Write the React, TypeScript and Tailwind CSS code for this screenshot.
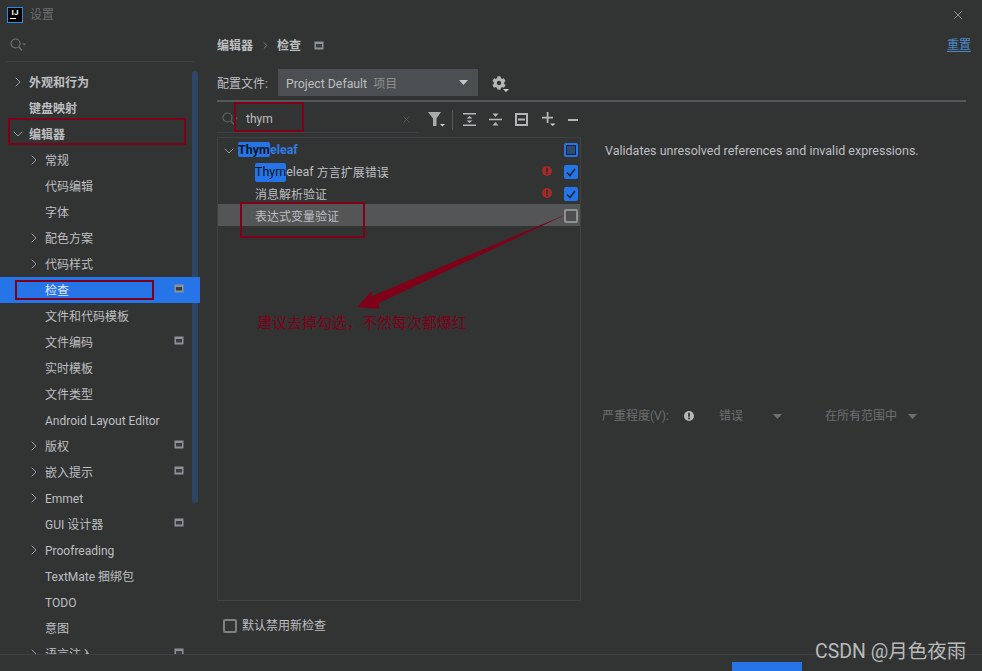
import React from 'react';
import { ChevronRight, ChevronDown, X } from 'lucide-react';
import { FaCog } from 'react-icons/fa';

interface NavItem {
  label: string;
  level: 0 | 1;
  arrow?: 'right' | 'down';
  badge?: boolean;
  active?: boolean;
}

const navItems: NavItem[] = [
  { label: '外观和行为', level: 0, arrow: 'right' },
  { label: '键盘映射', level: 0 },
  { label: '编辑器', level: 0, arrow: 'down' },
  { label: '常规', level: 1, arrow: 'right' },
  { label: '代码编辑', level: 1 },
  { label: '字体', level: 1 },
  { label: '配色方案', level: 1, arrow: 'right' },
  { label: '代码样式', level: 1, arrow: 'right' },
  { label: '检查', level: 1, badge: true, active: true },
  { label: '文件和代码模板', level: 1 },
  { label: '文件编码', level: 1, badge: true },
  { label: '实时模板', level: 1 },
  { label: '文件类型', level: 1 },
  { label: 'Android Layout Editor', level: 1 },
  { label: '版权', level: 1, arrow: 'right', badge: true },
  { label: '嵌入提示', level: 1, arrow: 'right', badge: true },
  { label: 'Emmet', level: 1, arrow: 'right' },
  { label: 'GUI 设计器', level: 1, badge: true },
  { label: 'Proofreading', level: 1, arrow: 'right' },
  { label: 'TextMate 捆绑包', level: 1 },
  { label: 'TODO', level: 1 },
  { label: '意图', level: 1 },
  { label: '语言注入', level: 1, arrow: 'right', badge: true },
];

const ProjectBadge = () => (
  <svg width="10" height="9" viewBox="0 0 10 9" className="shrink-0">
    <rect x="0.5" y="0.5" width="9" height="8" fill="#8b9298" />
    <rect x="2" y="3" width="6" height="3.5" fill="#3a3d3f" />
  </svg>
);

const SearchIcon = ({ color }: { color: string }) => (
  <svg width="16" height="14" viewBox="0 0 16 14" fill="none" className="shrink-0">
    <circle cx="5.5" cy="5.5" r="4.5" stroke={color} strokeWidth="1.2" />
    <path d="M9 9l3 3.5" stroke={color} strokeWidth="1.3" />
    <path d="M12.5 5.5h3.5l-1.75 2z" fill={color} />
  </svg>
);

const ErrorDot = ({ color, mark }: { color: string; mark: string }) => (
  <svg width="10" height="10" viewBox="0 0 10 10" className="shrink-0">
    <circle cx="5" cy="5" r="5" fill={color} />
    <rect x="4.1" y="1.8" width="1.8" height="4" fill={mark} />
    <rect x="4.1" y="6.6" width="1.8" height="1.7" fill={mark} />
  </svg>
);

const CheckBox = ({ state }: { state: 'on' | 'mixed' | 'off' }) => {
  if (state === 'on') {
    return (
      <div className="w-[14px] h-[14px] rounded-[2px] bg-[#2675e8] flex items-center justify-center">
        <svg width="10" height="9" viewBox="0 0 10 9" fill="none">
          <path d="M1 4.5l3 3 5-6.5" stroke="#16243a" strokeWidth="1.5" />
        </svg>
      </div>
    );
  }
  if (state === 'mixed') {
    return (
      <div className="w-[14px] h-[14px] rounded-[2px] bg-[#2675e8] flex items-center justify-center">
        <div className="w-[10px] h-[10px] bg-[#2c4a72] border border-[#16243a]" />
      </div>
    );
  }
  return <div className="w-[14px] h-[14px] rounded-[2px] border-2 border-[#8f9192] bg-[#4c4e50]" />;
};

const DropArrow = ({ color = '#6e6e6e' }: { color?: string }) => (
  <svg width="9" height="5" viewBox="0 0 9 5" className="shrink-0">
    <path d="M0 0h9L4.5 5z" fill={color} />
  </svg>
);

const Toolbar = () => (
  <div className="flex items-center h-[27px] ml-[9px]">
    <svg width="18" height="17" viewBox="0 0 18 17">
      <path d="M0 1h13L8.5 7.5V15H5V7.5z" fill="#a9abac" />
      <path d="M12 13h5l-2.5 2.5z" fill="#d0d0d0" />
    </svg>
    <div className="w-px h-[20px] bg-[#55585a] ml-[6px] mr-[10px]" />
    <svg width="13" height="13" viewBox="0 0 13 13" className="mr-[13px]">
      <path d="M0 0h13v1.6H0zM0 11.4h13V13H0zM3.5 5.6L6.5 3l3 2.6zM3.5 7.4h6l-3 2.6z" fill="#b4b6b7" />
    </svg>
    <svg width="13" height="13" viewBox="0 0 13 13" className="mr-[13px]">
      <path d="M0 5.7h13v1.6H0zM3.5 0.5h6l-3 3.6zM3.5 12.5l3-3.6 3 3.6z" fill="#b4b6b7" />
    </svg>
    <svg width="13" height="13" viewBox="0 0 13 13" fill="none" className="mr-[14px]">
      <rect x="1" y="1" width="11" height="11" stroke="#b4b6b7" strokeWidth="2" />
      <path d="M3 6.5h7" stroke="#b4b6b7" strokeWidth="2" />
    </svg>
    <svg width="16" height="15" viewBox="0 0 16 15" className="mr-[10px]">
      <path d="M4.7 0h1.8v4.7H11v1.8H6.5V11H4.7V6.5H0V4.7h4.7z" fill="#b4b6b7" />
      <path d="M8 11.5h5.5L10.75 14z" fill="#d0d0d0" />
    </svg>
    <div className="w-[10px] h-[2px] bg-[#b4b6b7]" />
  </div>
);

const Sidebar = () => (
  <div className="w-[200px] shrink-0 flex flex-col relative overflow-hidden">
    <div className="h-[33px] shrink-0 mx-[6px] border-b border-[#3f4244] flex items-center pl-[4px]">
      <SearchIcon color="#6f7172" />
    </div>
    <div className="absolute left-[192px] top-[42px] w-[6px] h-[432px] rounded-[3px] bg-[#2f4565]" />
    <div className="pt-[7px]">
      {navItems.map((item) => (
        <div
          key={item.label}
          className={
            'relative h-[26px] flex items-center text-[12px] ' +
            (item.active ? 'bg-[#2675e8] text-[#e4e9ef]' : 'text-[#bdbfc0]')
          }
        >
          <div className={item.level === 0 ? 'w-[29px] pl-[10px]' : 'w-[45px] pl-[26px]'}>
            {item.arrow === 'right' && <ChevronRight size={16} strokeWidth={1.5} className="text-[#9a9c9d]" />}
            {item.arrow === 'down' && <ChevronDown size={16} strokeWidth={1.5} className="text-[#9a9c9d]" />}
          </div>
          <span className={'flex-1 pt-[2px] ' + (item.level === 0 ? 'font-bold' : '')}>{item.label}</span>
          {item.badge && (
            <div className="mr-[16px] -mt-[3px]">
              <ProjectBadge />
            </div>
          )}
        </div>
      ))}
    </div>
  </div>
);

const TreeRow = ({
  indent,
  selected,
  error,
  box,
  children,
}: {
  indent: number;
  selected?: boolean;
  error?: boolean;
  box: 'on' | 'mixed' | 'off';
  children: React.ReactNode;
}) => (
  <div className={'h-[22px] flex items-center pr-[2px] ' + (selected ? 'bg-[#535557]' : '')} style={{ paddingLeft: indent }}>
    <div className="flex-1 flex items-center whitespace-nowrap pt-[3px]">{children}</div>
    {error && (
      <div className="mr-[12px]">
        <ErrorDot color="#a32a26" mark="#2f3131" />
      </div>
    )}
    <div className="pt-[2px]">
      <CheckBox state={box} />
    </div>
  </div>
);

const Hit = ({ children }: { children: React.ReactNode }) => (
  <span className="bg-[#2675e8] text-[#0c1522] rounded-[2px] text-[12.5px]">{children}</span>
);

const Inspections = () => (
  <div className="flex-1 flex flex-col pl-[17px] pr-[16px] min-w-0">
    <div className="h-[32px] shrink-0 flex items-center text-[12px] text-[#bdbfc0] font-bold">
      <span className="pt-[2px]">编辑器</span>
      <ChevronRight size={11} strokeWidth={1.5} className="ml-[7px] mr-[6px] text-[#9a9c9d]" />
      <span className="pt-[2px]">检查</span>
      <div className="ml-[13px]">
        <ProjectBadge />
      </div>
      <span className="ml-auto -mr-[5px] text-[#4a88c7] font-normal underline underline-offset-2">重置</span>
    </div>

    <div className="flex items-center h-[27px] shrink-0 mt-[8px] text-[12px] text-[#bdbfc0]">
      <span className="w-[61px] pt-[3px]">配置文件:</span>
      <div className="w-[200px] h-[27px] bg-[#4c4f51] flex items-center pl-[8px] pr-[10px]">
        <span className="pt-[3px] text-[12.3px]">Project Default</span>
        <span className="ml-[6px] pt-[3px] text-[#8d8f90]">项目</span>
        <div className="ml-auto">
          <DropArrow color="#c4c6c7" />
        </div>
      </div>
      <div className="relative ml-[14px] mt-[1px]">
        <FaCog size={14} className="text-[#b4b6b7]" />
        <svg width="6" height="3" viewBox="0 0 6 3" className="absolute -right-[3px] -bottom-[2px]">
          <path d="M0 0h6L3 3z" fill="#d0d0d0" />
        </svg>
      </div>
    </div>
    <div className="h-[2px] shrink-0 bg-[#55585a] mt-[4px]" />

    <div className="flex items-start mt-[4px] min-h-0 flex-1">
      <div className="w-[364px] shrink-0 flex flex-col h-full">
        <div className="flex items-center shrink-0">
          <div className="w-[202px] h-[27px] border-b border-[#3f4244] flex items-center pl-[5px] pr-[7px] text-[12px] text-[#bdbfc0]">
            <SearchIcon color="#5f6162" />
            <span className="ml-[8px]">thym</span>
            <X size={11} strokeWidth={1.5} className="ml-auto text-[#5f6162]" />
          </div>
          <Toolbar />
        </div>
        <div className="mt-[4px] h-[464px] shrink-0 border border-[#3f4244] text-[12px] text-[#bdbfc0]">
          <TreeRow indent={3} box="mixed">
            <ChevronDown size={16} strokeWidth={1.5} className="text-[#9a9c9d]" />
            <span className="text-[#2f7ae5] font-bold ml-[1px] text-[12.5px]">
              <Hit>Thym</Hit>eleaf
            </span>
          </TreeRow>
          <TreeRow indent={37} box="on" error>
            <Hit>Thym</Hit>
            <span className="text-[12.5px]">eleaf</span>
            <span className="ml-[3px]">方言扩展错误</span>
          </TreeRow>
          <TreeRow indent={37} box="on" error>
            消息解析验证
          </TreeRow>
          <TreeRow indent={37} box="off" selected>
            表达式变量验证
          </TreeRow>
        </div>
        <div className="flex items-center mt-[16px] ml-[6px] text-[12px] text-[#bdbfc0]">
          <div className="w-[14px] h-[14px] rounded-[2px] border-2 border-[#7d7f80] bg-[#333535]" />
          <span className="ml-[5px]">默认禁用新检查</span>
        </div>
      </div>

      <div className="flex-1 flex flex-col pl-[24px] pt-[36px] h-full text-[12px]">
        <p className="text-[#bdbfc0] text-[12.5px] leading-[18px] whitespace-nowrap">Validates unresolved references and invalid expressions.</p>
        <div className="flex items-center mt-[247px] -ml-[3px] text-[#6e6f70] whitespace-nowrap">
          <span className="w-[82px]">严重程度(V):</span>
          <ErrorDot color="#b4b6b7" mark="#333535" />
          <span className="ml-[25px] w-[54px]">错误</span>
          <DropArrow />
          <span className="ml-[43px]">在所有范围中</span>
          <div className="ml-[11px]">
            <DropArrow />
          </div>
        </div>
      </div>
    </div>
  </div>
);

const Annotations = () => (
  <>
    <div className="absolute left-[8px] top-[118px] w-[178px] h-[27px] border-2 border-[#7f0019]" />
    <div className="absolute left-[15px] top-[280px] w-[139px] h-[20px] border-2 border-[#7f0019]" />
    <div className="absolute left-[234px] top-[102px] w-[70px] h-[30px] border-2 border-[#7f0019]" />
    <div className="absolute left-[240px] top-[202px] w-[125px] h-[36px] border-2 border-[#7f0019]" />
    <svg width="982" height="671" viewBox="0 0 982 671" className="absolute left-0 top-0 pointer-events-none">
      <path d="M567 214L379 303L379 309L357 307L372 291L372 296Z" fill="#7f0019" />
    </svg>
    <span className="absolute left-[257px] top-[313px] text-[15px] leading-[20px] text-[#7f0019] whitespace-nowrap">
      建议去掉勾选，不然每次都爆红
    </span>
    <span className="absolute left-[815px] top-[638px] text-[19.5px] leading-[28px] text-[#b9bbbb] whitespace-nowrap">
      CSDN @月色夜雨
    </span>
  </>
);

export default function App() {
  return (
    <div className="relative w-[982px] h-[671px] overflow-hidden flex flex-col bg-[#323434] font-['Roboto','Noto_Sans_CJK_SC',sans-serif]">
      <div className="h-[29px] shrink-0 flex items-center pl-[7px] pr-[17px]">
        <div className="w-[16px] h-[16px] bg-black border border-[#2b8ae8] flex flex-col items-center">
          <span className="text-[8px] leading-[9px] font-bold text-white">IJ</span>
          <div className="w-[6px] h-px bg-white mt-[1px] self-start ml-[2px]" />
        </div>
        <span className="ml-[7px] text-[12px] text-[#6e6f70]">设置</span>
        <X size={14} strokeWidth={1.5} className="ml-auto text-[#9a9c9d]" />
      </div>
      <div className="flex h-[625px] shrink-0 overflow-hidden">
        <Sidebar />
        <Inspections />
      </div>
      <div className="flex-1 border-t border-[#3f4244] flex justify-end pr-[180px] pt-[7px]">
        <div className="w-[70px] h-[26px] bg-[#2675e8]" />
      </div>
      <Annotations />
    </div>
  );
}
